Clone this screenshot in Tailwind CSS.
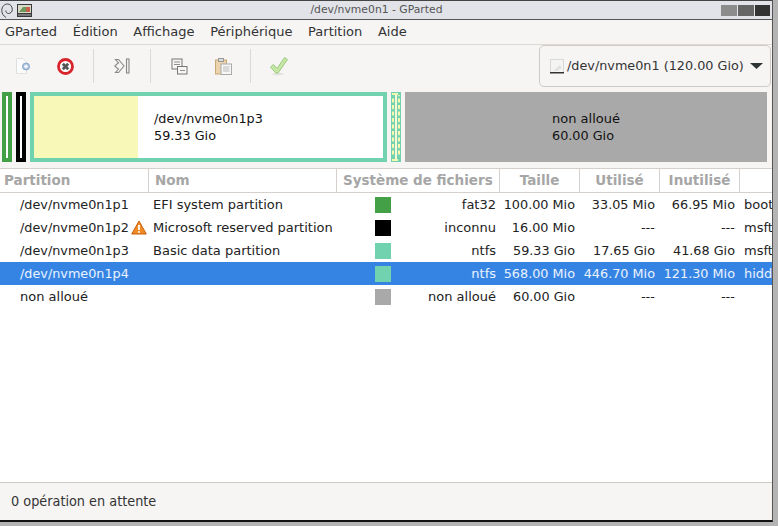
<!DOCTYPE html>
<html>
<head>
<meta charset="utf-8">
<script src="https://cdn.jsdelivr.net/npm/@tailwindcss/browser@4"></script>
</head>
<body class="bg-[#b4b4b4] font-['DejaVu_Sans',sans-serif] text-[13px] text-[#2e3436] overflow-hidden">
<div class="w-[778px] h-[526px] flex flex-col">
  <div class="w-[773px] h-[522px] flex flex-col bg-[#f6f5f4] border-r border-r-[#555] border-t border-t-[#444] border-b-2 border-b-[#111]">
    <!-- title bar -->
    <div class="h-[19px] shrink-0 bg-[#e1e3e9] border-b border-b-[#555] flex items-center pl-[1px] pr-[2px]">
      <svg width="12" height="15" viewBox="0 0 12 15" class="shrink-0" fill="none" stroke="#444" stroke-width="1"><path d="M5 14.500C2.500 13 .8 10.500 .8 7.500C.8 3.500 3.500 1 6.500 1C9.500 1 11.300 3.500 11.300 6.500C11.300 8.800 9.500 10.500 7.500 10.500C6 10.500 4.800 9.300 4.800 7.500"/></svg>
      <svg width="15" height="13" viewBox="0 0 15 13" class="shrink-0 ml-[4px]"><rect width="15" height="13" fill="#3a3a3a"/><rect x="1" y="1" width="13" height="8" fill="#d9d9c8"/><path d="M2 8L6 3L9 3L9 8Z" fill="#6c9a5a"/><path d="M9 3L13 3L13 8L9 8Z" fill="#c9614a"/><rect x="1" y="10" width="13" height="2" fill="#777"/></svg>
      <div class="flex-1 text-center text-[10.8px] text-[#555]">/dev/nvme0n1 - GParted</div>
      <div class="flex gap-[1px] shrink-0">
        <div class="w-[16px] h-[11px] bg-[#8c8c8c]"></div>
        <div class="w-[16px] h-[11px] bg-[#666]"></div>
        <div class="w-[15px] h-[11px] bg-[#333]"></div>
      </div>
    </div>
    <!-- menu -->
    <div class="h-[25px] shrink-0 flex items-center gap-[15.7px] pl-[5px] border-b border-b-[#ddd9d5] text-[#333]">
      <span>GParted</span><span>Édition</span><span>Affichage</span><span>Périphérique</span><span>Partition</span><span>Aide</span>
    </div>
    <!-- toolbar -->
    <div class="h-[42px] shrink-0 flex items-center">
      <div class="w-[45px] flex justify-center shrink-0">
        <svg width="16" height="17" viewBox="0 0 16 17" fill="none"><path d="M1.500 .5H8L11.500 4V15.500H1.500Z" fill="#fbfbfb" stroke="#dfdfdf"/><circle cx="11" cy="8.500" r="3.500" fill="#a9c0dd" stroke="#8ba8cc"/><path d="M9 8.500H13M11 6.500V10.500" stroke="#fff" stroke-width="1.300"/></svg>
      </div>
      <div class="w-[48px] pr-[8px] flex justify-center shrink-0">
        <svg width="17" height="17" viewBox="0 0 17 17"><circle cx="8.500" cy="8.500" r="7" fill="#fff" stroke="#d8232a" stroke-width="2.800"/><path d="M5.800 5.800L11.200 11.200M11.200 5.800L5.800 11.200" stroke="#555" stroke-width="2.800"/></svg>
      </div>
      <div class="w-[1px] h-[34px] bg-[#dcd8d4] shrink-0"></div>
      <div class="w-[56px] flex justify-center shrink-0">
        <svg width="16" height="16" viewBox="0 0 16 16" fill="none" stroke="#888" stroke-width="1.100"><path d="M1.500 1.500L4.500 1.500L10 8L4.500 14.500L1.500 14.500L4.500 11L3 10L.7 8L3 6L4.500 5Z"/><rect x="12.500" y="1" width="2.500" height="14" fill="#f0f0f0"/></svg>
      </div>
      <div class="w-[1px] h-[34px] bg-[#dcd8d4] shrink-0"></div>
      <div class="w-[99px] flex justify-center gap-[27px] shrink-0 pl-[2px]">
        <svg width="17" height="17" viewBox="0 0 17 17" fill="#f6f5f4" stroke="#777" stroke-width="1"><rect x="1" y="1" width="10" height="10"/><path d="M3 4H9M3 6.500H9" stroke-width=".8"/><rect x="6.500" y="8.500" width="9.500" height="7.500"/><path d="M9 12.500H14" stroke-width=".8"/></svg>
        <svg width="17" height="17" viewBox="0 0 17 17"><rect x=".5" y="2" width="11" height="14" fill="#ecd3ae" stroke="#c9a877"/><rect x="3.500" y=".5" width="5" height="3" fill="#ddd" stroke="#999"/><rect x="6" y="6" width="10.500" height="10.500" fill="#f6f6f6" stroke="#aaa"/><path d="M8 9H14.500M8 11H14.500M8 13H14.500" stroke="#bbb"/></svg>
      </div>
      <div class="w-[1px] h-[34px] bg-[#dcd8d4] shrink-0"></div>
      <div class="w-[55px] flex justify-center shrink-0">
        <svg width="20" height="20" viewBox="0 0 20 20"><ellipse cx="9" cy="18" rx="6" ry="1.200" fill="#e2e2dc"/><path d="M1.500 11L4.500 8.500L8 12.500L15.500 1.500L18.500 3.500L9 17H7Z" fill="#c6e8a5" stroke="#9bc97e"/></svg>
      </div>
      <div class="ml-auto mr-[1px] w-[232px] h-[42px] border border-[#cfcac5] rounded-[5px] flex items-center pl-[10px] gap-[3px] text-[#333] text-[12.8px]">
        <svg width="14" height="15" viewBox="0 0 14 15" class="shrink-0"><rect x=".5" y=".5" width="13" height="13" fill="#f4f4f2" stroke="#d8d8d8"/><path d="M3 12L10 6L12 9L7 12Z" fill="#e2e2e2"/><rect x="0" y="13" width="14" height="1.500" fill="#333"/></svg>
        <span>/dev/nvme0n1 (120.00 Gio)</span>
        <svg width="13" height="6" viewBox="0 0 13 6" class="ml-[3px] shrink-0"><path d="M0 0H13L6.500 6Z" fill="#2e3436"/></svg>
      </div>
    </div>
    <!-- partition graph -->
    <div class="h-[70px] shrink-0 mt-[5px] flex gap-[4px] pl-[2px] text-[#111]">
      <div class="w-[10px] border-[4px] border-[#43a047] bg-white"></div>
      <div class="w-[10px] border-[4px] border-black bg-white"></div>
      <div class="w-[357px] border-[4px] border-[#70d2af] bg-white flex">
        <div class="w-[104px] bg-[#f8f8b8]"></div>
        <div class="pl-[16px] flex flex-col justify-center leading-[17px] text-[12.8px]"><span>/dev/nvme0n1p3</span><span>59.33 Gio</span></div>
      </div>
      <svg width="10" height="70" viewBox="0 0 10 70" class="shrink-0">
        <defs>
          <pattern id="dash" width="3" height="6.500" patternUnits="userSpaceOnUse"><rect width="3" height="4" fill="#f8f8b0"/></pattern>
        </defs>
        <rect width="10" height="70" fill="#70d2af"/>
        <rect x="4" y="2" width="2" height="66" fill="#f6f8d8"/>
        <rect x="1" y="1" width="6" height="2" fill="#f8f8b0"/>
        <rect x="1" y="67" width="6" height="2" fill="#f8f8b0"/>
        <rect x="1" y="5" width="2" height="60" fill="url(#dash)"/>
        <rect x="7" y="3" width="2" height="62" fill="url(#dash)"/>
      </svg>
      <div class="w-[362px] bg-[#a9a9a9] pl-[147px] flex flex-col justify-center leading-[17px]"><span>non alloué</span><span class="text-[12.8px]">60.00 Gio</span></div>
    </div>
    <!-- table -->
    <div class="mt-[6px] flex-1 bg-white flex flex-col min-h-0 overflow-hidden border-t border-t-[#d5d0cc]">
      <div class="h-[24px] shrink-0 grid grid-cols-[149px_188px_163px_80px_80px_80px_32px] border-b border-b-[#d5d0cc] font-bold text-[#a6a6a6] items-stretch text-[13.5px]">
        <div class="border-r border-r-[#d5d0cc] pl-[4px] flex items-center">Partition</div>
        <div class="border-r border-r-[#d5d0cc] pl-[6px] flex items-center">Nom</div>
        <div class="border-r border-r-[#d5d0cc] pl-[6px] flex items-center whitespace-nowrap">Système de fichiers</div>
        <div class="border-r border-r-[#d5d0cc] flex items-center justify-center">Taille</div>
        <div class="border-r border-r-[#d5d0cc] flex items-center justify-center">Utilisé</div>
        <div class="border-r border-r-[#d5d0cc] flex items-center justify-center">Inutilisé</div>
        <div></div>
      </div>
      <div class="h-[23px] grid grid-cols-[149px_188px_163px_80px_80px_80px_32px] items-center text-[#222] whitespace-nowrap">
        <div class="pl-[20px] text-[12.8px]">/dev/nvme0n1p1</div><div class="pl-[4px]">EFI system partition</div>
        <div class="flex items-center pl-[38px] justify-between pr-[4px]"><span class="w-[16px] h-[16px] bg-[#43a047]"></span><span>fat32</span></div>
        <div class="text-right pr-[5px] text-[12.8px]">100.00 Mio</div><div class="text-right pr-[5px] text-[12.8px]">33.05 Mio</div><div class="text-right pr-[5px] text-[12.8px]">66.95 Mio</div><div class="pl-[4px] overflow-hidden">boot, esp</div>
      </div>
      <div class="h-[23px] grid grid-cols-[149px_188px_163px_80px_80px_80px_32px] items-center text-[#222] whitespace-nowrap">
        <div class="pl-[20px] flex items-center text-[12.8px]">/dev/nvme0n1p2<svg width="16" height="15" viewBox="0 0 16 15" class="shrink-0 ml-[2px]"><path d="M8 1L15.300 14H.7Z" fill="#f08a24" stroke="#c85f10" stroke-linejoin="round"/><path d="M8 5V10" stroke="#fff" stroke-width="1.800"/><circle cx="8" cy="12" r="1" fill="#fff"/></svg></div><div class="pl-[4px]">Microsoft reserved partition</div>
        <div class="flex items-center pl-[38px] justify-between pr-[4px]"><span class="w-[16px] h-[16px] bg-black"></span><span>inconnu</span></div>
        <div class="text-right pr-[5px] text-[12.8px]">16.00 Mio</div><div class="text-right pr-[5px]">---</div><div class="text-right pr-[5px]">---</div><div class="pl-[4px] overflow-hidden">msftres</div>
      </div>
      <div class="h-[23px] grid grid-cols-[149px_188px_163px_80px_80px_80px_32px] items-center text-[#222] whitespace-nowrap">
        <div class="pl-[20px] text-[12.8px]">/dev/nvme0n1p3</div><div class="pl-[4px]">Basic data partition</div>
        <div class="flex items-center pl-[38px] justify-between pr-[4px]"><span class="w-[16px] h-[16px] bg-[#70d2af]"></span><span>ntfs</span></div>
        <div class="text-right pr-[5px] text-[12.8px]">59.33 Gio</div><div class="text-right pr-[5px] text-[12.8px]">17.65 Gio</div><div class="text-right pr-[5px] text-[12.8px]">41.68 Gio</div><div class="pl-[4px] overflow-hidden">msftdata</div>
      </div>
      <div class="h-[23px] grid grid-cols-[149px_188px_163px_80px_80px_80px_32px] items-center bg-[#3584e4] text-white/90 whitespace-nowrap">
        <div class="pl-[20px] text-[12.8px]">/dev/nvme0n1p4</div><div class="pl-[4px]"></div>
        <div class="flex items-center pl-[38px] justify-between pr-[4px]"><span class="w-[16px] h-[16px] bg-[#70d2af]"></span><span>ntfs</span></div>
        <div class="text-right pr-[5px] text-[12.8px]">568.00 Mio</div><div class="text-right pr-[5px] text-[12.8px]">446.70 Mio</div><div class="text-right pr-[5px] text-[12.8px]">121.30 Mio</div><div class="pl-[4px] overflow-hidden">hidden</div>
      </div>
      <div class="h-[23px] grid grid-cols-[149px_188px_163px_80px_80px_80px_32px] items-center text-[#222] whitespace-nowrap">
        <div class="pl-[20px]">non alloué</div><div class="pl-[4px]"></div>
        <div class="flex items-center pl-[38px] justify-between pr-[4px]"><span class="w-[16px] h-[16px] bg-[#a9a9a9]"></span><span>non alloué</span></div>
        <div class="text-right pr-[5px] text-[12.8px]">60.00 Gio</div><div class="text-right pr-[5px]">---</div><div class="text-right pr-[5px]">---</div><div></div>
      </div>
    </div>
    <!-- status -->
    <div class="h-[38px] shrink-0 border-t border-t-[#cdc9c4] flex items-center pl-[11px] font-['DejaVu_Sans_Condensed','DejaVu_Sans',sans-serif] text-[14.3px] text-[#333]">0 opération en attente</div>
  </div>
</div>
</body>
</html>
